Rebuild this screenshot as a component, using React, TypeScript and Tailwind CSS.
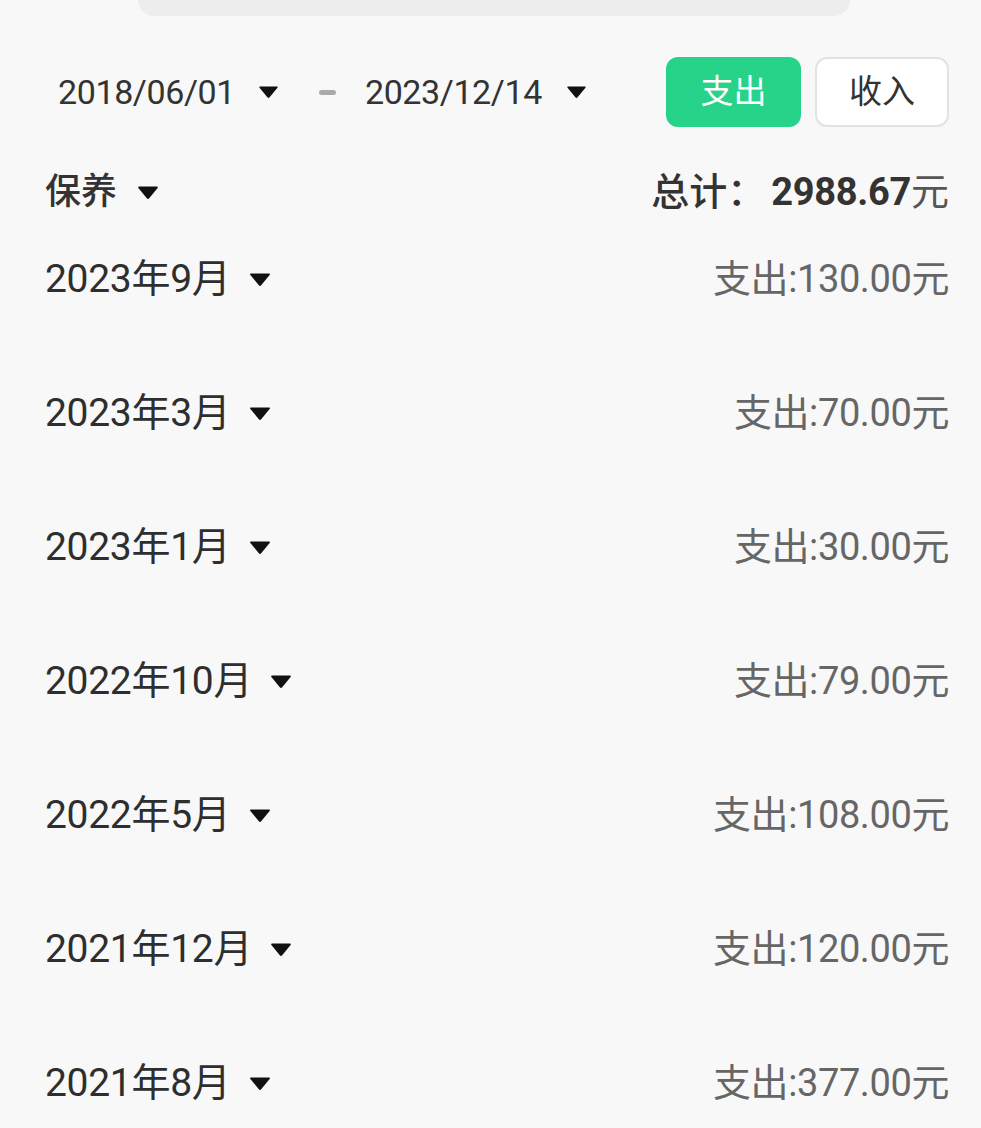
import React from 'react';

const font = { fontFamily: 'Roboto, "Noto Sans CJK SC", sans-serif' };

const Caret: React.FC<{ className?: string }> = ({ className }) => (
  <svg viewBox="0 0 22 15" className={className ?? 'w-[22px] h-[15px]'}>
    <path d="M2 1.5 H20 Q21.6 1.5 20.6 3 L12.2 13.2 Q11 14.6 9.8 13.2 L1.4 3 Q0.4 1.5 2 1.5 Z" fill="#111" />
  </svg>
);

const months = [
  { label: '2023年9月', amount: '130.00' },
  { label: '2023年3月', amount: '70.00' },
  { label: '2023年1月', amount: '30.00' },
  { label: '2022年10月', amount: '79.00' },
  { label: '2022年5月', amount: '108.00' },
  { label: '2021年12月', amount: '120.00' },
  { label: '2021年8月', amount: '377.00' },
];

export default function App() {
  return (
    <div className="w-[981px] h-[1128px] bg-[#f8f8f8] overflow-hidden text-[#333]" style={font}>
      {/* search bar remnant */}
      <div className="w-[712px] h-[16px] bg-[#ededed] rounded-b-[32px] ml-[138px]" />

      {/* date range + type toggle */}
      <div className="flex items-center pl-[58px] pr-[32px] mt-[41px] h-[70px]">
        <span className="text-[34px] tracking-[-0.4px] text-[#333]">2018/06/01</span>
        <Caret className="w-[21px] h-[14px] ml-[23px]" />
        <div className="w-[17px] h-[5px] rounded-full bg-[#aaa] ml-[40px]" />
        <span className="text-[34px] tracking-[-0.4px] text-[#333] ml-[29px]">2023/12/14</span>
        <Caret className="w-[21px] h-[14px] ml-[24px]" />
        <div className="ml-auto flex gap-[14px]">
          <button className="w-[135px] h-[70px] rounded-[12px] bg-[#27d388] text-white text-[33px]">支出</button>
          <button className="w-[134px] h-[70px] rounded-[12px] bg-white border-2 border-[#e2e2e2] text-[#333] text-[33px]">收入</button>
        </div>
      </div>

      {/* category + total */}
      <div className="flex items-center justify-between pl-[45px] pr-[32px] mt-[37px] h-[56px]">
        <div className="flex items-center">
          <span className="text-[36px] font-medium text-[#333]">保养</span>
          <Caret className="w-[22px] h-[15px] ml-[20px]" />
        </div>
        <div className="flex items-baseline text-[38px] text-[#333]">
          <span className="font-medium">总计：</span>
          <span className="font-bold tracking-[-0.3px] ml-[6px]">2988.67</span>
          <span className="text-[#555]">元</span>
        </div>
      </div>

      {/* months */}
      <div className="flex flex-col">
        {months.map((m, i) => (
          <div
            key={m.label}
            className={`flex items-center justify-between pl-[45px] pr-[32px] h-[56px] ${i === 0 ? 'mt-[31px]' : 'mt-[78px]'}`}
          >
            <div className="flex items-center">
              <span className="text-[39px] tracking-[-0.3px] text-[#2e2e2e]">{m.label}</span>
              <Caret className="w-[22px] h-[15px] ml-[18px]" />
            </div>
            <span className="text-[38px] tracking-[-0.4px] text-[#666]">支出:{m.amount}元</span>
          </div>
        ))}
      </div>
    </div>
  );
}
